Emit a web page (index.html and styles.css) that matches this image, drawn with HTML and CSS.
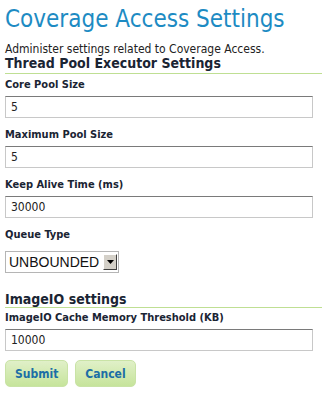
FILE: index.html
```html
<!DOCTYPE html>
<html lang="en">
<head>
<meta name="viewport" content="width=device-width, initial-scale=1">
<title>Coverage Access Settings</title>
<link rel="stylesheet" href="styles.css">
</head>
<body>

<h1>Coverage Access Settings</h1>
<p class="intro">Administer settings related to Coverage Access.</p>

<form>
  <h2>Thread Pool Executor Settings</h2>
  <ul class="fields">
    <li>
      <label>Core Pool Size</label>
      <input type="text" value="5">
    </li>
    <li>
      <label>Maximum Pool Size</label>
      <input type="text" value="5">
    </li>
    <li>
      <label>Keep Alive Time (ms)</label>
      <input type="text" value="30000">
    </li>
    <li>
      <label>Queue Type</label>
      <div class="select">
        <span class="select-value">UNBOUNDED</span>
        <span class="select-arrow"><svg width="7" height="4" viewBox="0 0 7 4"><path d="M0 0h7L3.5 4z" fill="#000"/></svg></span>
      </div>
    </li>
  </ul>

  <h2 class="second">ImageIO settings</h2>
  <ul class="fields">
    <li class="image-io">
      <label>ImageIO Cache Memory Threshold (KB)</label>
      <input type="text" value="10000">
    </li>
  </ul>

  <div class="buttons">
    <button type="button">Submit</button>
    <button type="button">Cancel</button>
  </div>
</form>

</body>
</html>
```
FILE: styles.css
```css
body {
  margin: 0;
  padding: 0 0 0 5px;
  font-family: 'DejaVu Sans Condensed', 'DejaVu Sans', sans-serif;
  font-size: 12px;
  color: #222;
  background: #fff;
}
h1 {
  font-weight: normal;
  font-size: 24px;
  line-height: 30px;
  color: #1d8bc3;
  margin: 4px 0 9px;
}
.intro {
  margin: 0;
  line-height: 13px;
}
h2 {
  font-size: 14px;
  line-height: 15px;
  color: #1a2433;
  margin: 0;
  padding-bottom: 2px;
  border-bottom: 1px solid #bfdf93;
}
h2.second {
  margin-top: 13px;
  padding-bottom: 0;
}
.fields {
  list-style: none;
  margin: 0;
  padding: 0;
}
.fields li {
  padding-top: 4px;
  padding-bottom: 6px;
}
.fields li.image-io {
  padding-top: 3px;
}
label {
  display: block;
  font-weight: bold;
  font-size: 11px;
  line-height: 14px;
  margin-bottom: 4px;
  color: #1a2433;
}
input[type="text"] {
  display: block;
  box-sizing: border-box;
  width: 308px;
  height: 22px;
  margin: 0;
  padding: 2px 5px;
  font-family: 'DejaVu Sans Condensed', 'DejaVu Sans', sans-serif;
  font-size: 12px;
  color: #222;
  border: 1px solid #c8c8c8;
  border-top-color: #7a7a7a;
}
.select {
  display: inline-flex;
  align-items: center;
  margin-top: 5px;
  height: 22px;
  box-sizing: border-box;
  border: 1px solid #b5b5b5;
  padding: 0 1px 0 3px;
  font-family: 'Liberation Sans', sans-serif;
  font-size: 14px;
  color: #111;
}
.select-value {
  margin-right: 4px;
}
.select-arrow {
  display: flex;
  align-items: center;
  justify-content: center;
  width: 14px;
  height: 16px;
  box-sizing: border-box;
  background: #d4d0c8;
  border: 1px solid;
  border-color: #fff #404040 #404040 #fff;
}
.buttons {
  display: flex;
  gap: 7px;
  margin-top: 3px;
}
button {
  font-family: 'DejaVu Sans Condensed', 'DejaVu Sans', sans-serif;
  font-size: 12px;
  font-weight: bold;
  color: #1b6ea6;
  height: 27px;
  padding: 0 9px;
  border: 1px solid #c9e3a6;
  border-radius: 5px;
  background: linear-gradient(to bottom, #e0f0c8, #c6e49b);
  cursor: pointer;
}
```
